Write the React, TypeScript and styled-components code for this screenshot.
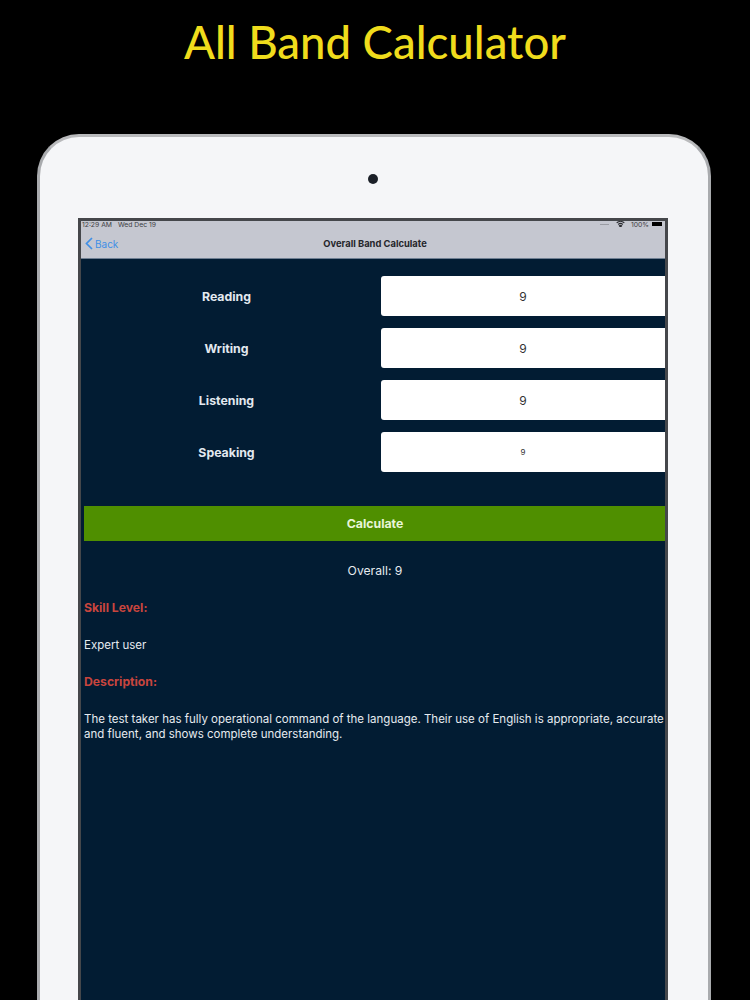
import styled, { createGlobalStyle } from "styled-components";

const GlobalStyle = createGlobalStyle`
    html, body {
        margin: 0;
        padding: 0;
        background-color: #000000;
    }
    * {
        box-sizing: border-box;
    }
`;

const Page = styled.div`
    width: 750px;
    height: 1000px;
    overflow: hidden;
    display: flex;
    flex-direction: column;
    align-items: center;
    background-color: #000000;
`;

const Title = styled.h1`
    flex: none;
    margin: 0;
    height: 134px;
    padding-top: 13px;
    font-family: "Lato", sans-serif;
    font-size: 45.5px;
    line-height: 58px;
    font-weight: 500;
    color: #f0dc1c;
`;

const Tablet = styled.div`
    flex: none;
    width: 674px;
    height: 1100px;
    margin-left: -3px;
    padding: 81px 39.5px 0 38.5px;
    display: flex;
    flex-direction: column;
    align-items: center;
    position: relative;
    border-radius: 42px;
    border: 3px solid #a9abae;
    border-top-color: #b9babc;
    background-color: #f5f6f8;
`;

const Camera = styled.span`
    position: absolute;
    top: 37px;
    left: 328px;
    width: 10px;
    height: 10px;
    border-radius: 50%;
    background-color: #1b2028;
`;

const Screen = styled.div`
    width: 590px;
    height: 1000px;
    flex: none;
    border: 3px solid #45474b;
    background-color: #021c33;
    font-family: "Inter", "Liberation Sans", sans-serif;
`;

const TopBar = styled.div`
    height: 38px;
    padding: 0 3px 0 1px;
    background-color: #c5c7d0;
    border-bottom: 1px solid #6f7f92;
    display: flex;
    flex-direction: column;
`;

const StatusBar = styled.div`
    height: 6px;
    display: flex;
    align-items: center;
    justify-content: space-between;
    font-size: 6.8px;
    color: #3d3e44;
`;

const StatusGroup = styled.div`
    display: flex;
    align-items: center;
    gap: 6px;
`;

const SignalDots = styled.span`
    width: 9px;
    height: 1px;
    margin-right: 1px;
    background-color: #9a9ca3;
`;

const Battery = styled.span`
    width: 10px;
    height: 4px;
    margin-left: -3px;
    background-color: #000000;
`;

const NavRow = styled.div`
    flex: 1;
    display: grid;
    grid-template-columns: 1fr auto 1fr;
    align-items: center;
    padding-top: 2px;
`;

const BackLink = styled.span`
    display: flex;
    align-items: center;
    gap: 2px;
    padding-left: 3px;
    font-size: 10px;
    color: #3f8fe6;
`;

const NavTitle = styled.span`
    padding-left: 6px;
    font-size: 9.4px;
    font-weight: 700;
    color: #25262b;
`;

const Form = styled.div`
    padding: 17px 0 0;
    display: flex;
    flex-direction: column;
    gap: 12px;
`;

const FieldRow = styled.div`
    display: grid;
    grid-template-columns: 1fr 284px;
    align-items: center;
    height: 40px;
`;

const FieldLabel = styled.span`
    padding-right: 9px;
    text-align: center;
    font-size: 12.3px;
    font-weight: 700;
    color: #e3e9f0;
`;

const FieldBox = styled.div<{ $small?: boolean }>`
    height: 40px;
    display: flex;
    align-items: center;
    justify-content: center;
    border-radius: 3px 0 0 3px;
    background-color: #ffffff;
    color: #333333;
    font-size: ${(p) => (p.$small ? "8px" : "12px")};
`;

const CalcButton = styled.div`
    height: 35px;
    margin: 34px 0 0 3px;
    padding-left: 1px;
    display: flex;
    align-items: center;
    justify-content: center;
    background-color: #4f8f00;
    color: #e8f5d8;
    font-size: 12.3px;
    font-weight: 700;
`;

const Overall = styled.div`
    margin-top: 21px;
    padding-left: 4px;
    height: 18px;
    text-align: center;
    font-size: 12.2px;
    line-height: 18px;
    color: #e6ebf0;
`;

const Results = styled.div`
    margin-top: 19px;
    padding-left: 3px;
    display: flex;
    flex-direction: column;
    gap: 20.5px;
`;

const Heading = styled.div`
    height: 18px;
    font-size: 12.2px;
    line-height: 18px;
    font-weight: 700;
    color: #c8453e;
`;

const BodyText = styled.div`
    font-size: 11.5px;
    line-height: 15px;
    color: #e6ebf0;
    white-space: nowrap;
`;

const App = () => {
    return (
        <Page>
            <GlobalStyle />
            <Title>All Band Calculator</Title>
            <Tablet>
                <Camera />
                <Screen>
                    <TopBar>
                        <StatusBar>
                            <StatusGroup>
                                <span>12:29 AM</span>
                                <span>Wed Dec 19</span>
                            </StatusGroup>
                            <StatusGroup>
                                <SignalDots />
                                <svg width="9" height="6" viewBox="0 0 16 11" fill="none" stroke="#2b2c30" strokeWidth="2">
                                    <path d="M1 3.6C5 -.2 11 -.2 15 3.6" />
                                    <path d="M3.8 6.4C6.3 4 9.7 4 12.2 6.4" />
                                    <path d="M8 11 5.9 8.8C7.1 7.7 8.9 7.7 10.1 8.8z" fill="#2b2c30" />
                                </svg>
                                <span>100%</span>
                                <Battery />
                            </StatusGroup>
                        </StatusBar>
                        <NavRow>
                            <BackLink>
                                <svg width="8" height="13" viewBox="0 0 8 13" fill="none" stroke="#3f8fe6" strokeWidth="1.7">
                                    <path d="M7 1 1.5 6.5 7 12" />
                                </svg>
                                Back
                            </BackLink>
                            <NavTitle>Overall Band Calculate</NavTitle>
                            <span />
                        </NavRow>
                    </TopBar>
                    <Form>
                        <FieldRow>
                            <FieldLabel>Reading</FieldLabel>
                            <FieldBox>9</FieldBox>
                        </FieldRow>
                        <FieldRow>
                            <FieldLabel>Writing</FieldLabel>
                            <FieldBox>9</FieldBox>
                        </FieldRow>
                        <FieldRow>
                            <FieldLabel>Listening</FieldLabel>
                            <FieldBox>9</FieldBox>
                        </FieldRow>
                        <FieldRow>
                            <FieldLabel>Speaking</FieldLabel>
                            <FieldBox $small>9</FieldBox>
                        </FieldRow>
                    </Form>
                    <CalcButton>Calculate</CalcButton>
                    <Overall>Overall: 9</Overall>
                    <Results>
                        <Heading>Skill Level:</Heading>
                        <BodyText>Expert user</BodyText>
                        <Heading>Description:</Heading>
                        <BodyText>
                            The test taker has fully operational command of the language. Their use of English is appropriate, accurate
                            <br />
                            and fluent, and shows complete understanding.
                        </BodyText>
                    </Results>
                </Screen>
            </Tablet>
        </Page>
    );
};

export default App;
